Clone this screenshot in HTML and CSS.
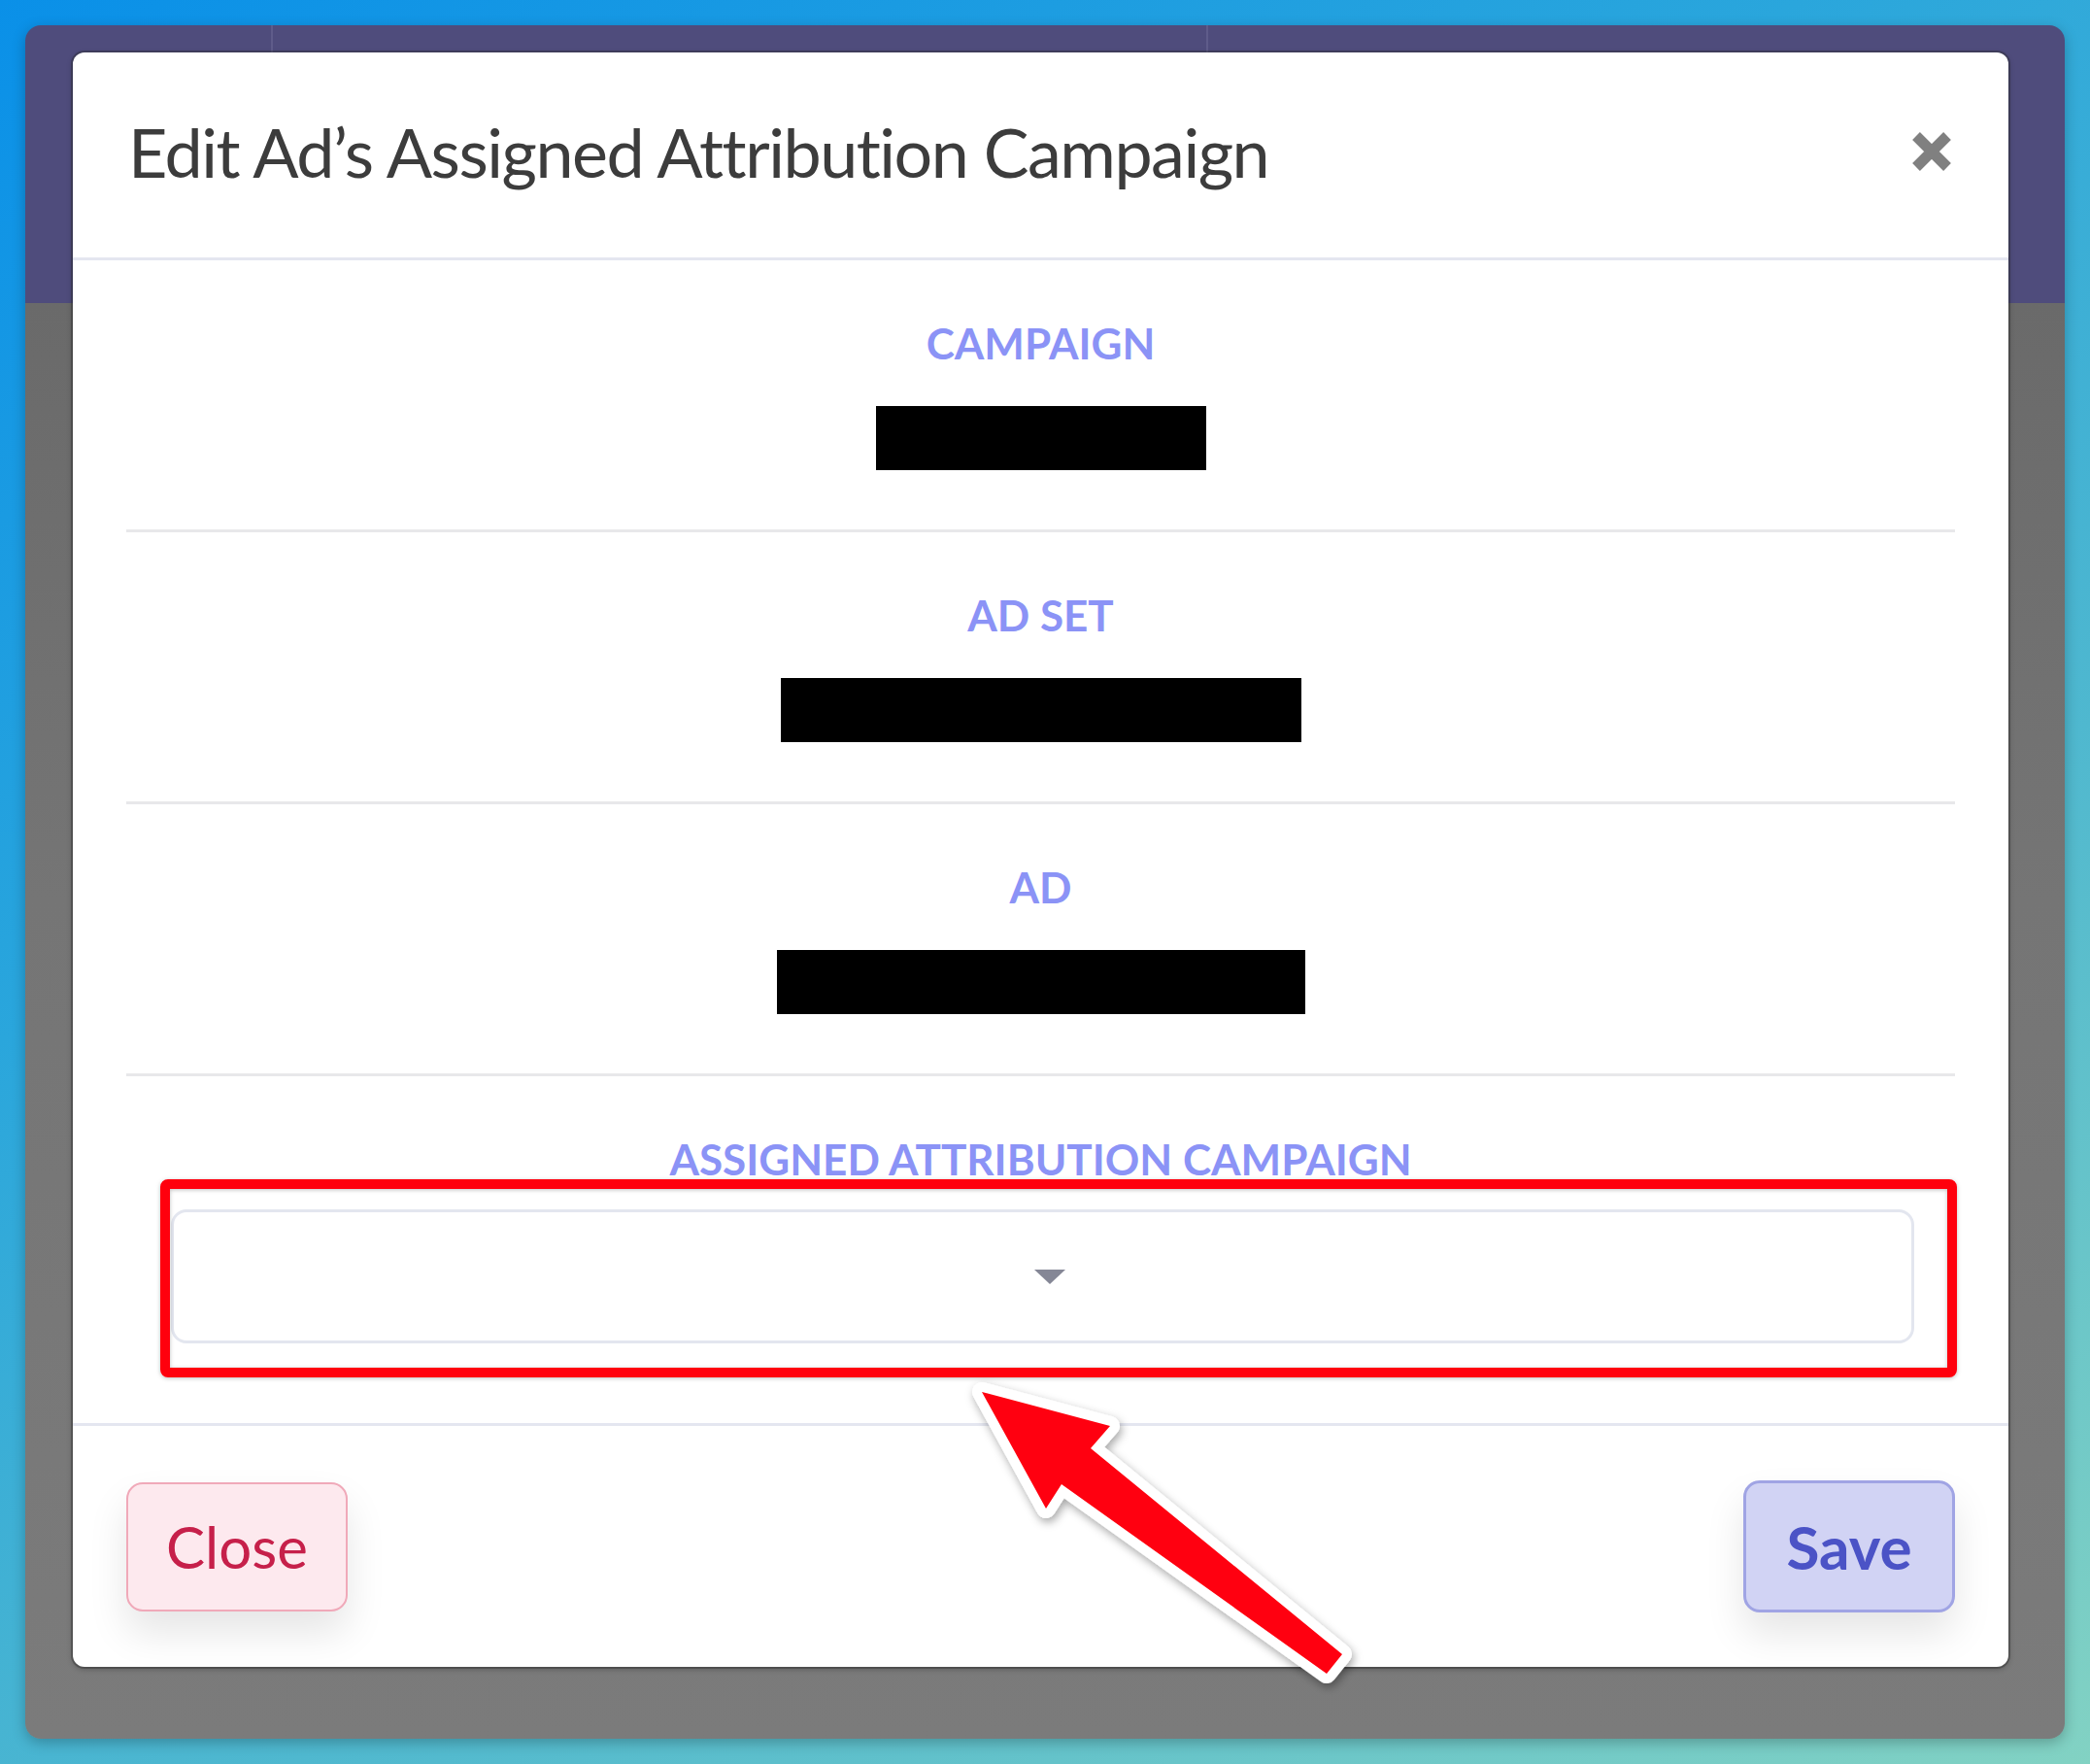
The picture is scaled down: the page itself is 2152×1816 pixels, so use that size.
FILE: index.html
```html
<!DOCTYPE html>
<html lang="en">
<head>
<meta charset="utf-8">
<title>Edit Ad's Assigned Attribution Campaign</title>
<link rel="stylesheet" href="styles.css">
</head>
<body>
<div class="window">
  <div class="modal">
    <div class="modal-header">
      <h1 class="modal-title">Edit Ad’s Assigned Attribution Campaign</h1>
      <button class="close-x" aria-label="Close">
        <svg width="42" height="42" viewBox="0 0 42 42"><path d="M5 5 L37 37 M37 5 L5 37" stroke="#808080" stroke-width="11" fill="none"/></svg>
      </button>
    </div>
    <div class="modal-body">
      <div class="field">
        <div class="field-label">CAMPAIGN</div>
        <div class="redact redact-1"></div>
      </div>
      <div class="field">
        <div class="field-label">AD SET</div>
        <div class="redact redact-2"></div>
      </div>
      <div class="field">
        <div class="field-label">AD</div>
        <div class="redact redact-3"></div>
      </div>
      <div class="field field-last">
        <div class="field-label">ASSIGNED ATTRIBUTION CAMPAIGN</div>
        <div class="select">
          <span class="caret"></span>
        </div>
      </div>
    </div>
    <div class="modal-footer">
      <button class="btn btn-close">Close</button>
      <button class="btn btn-save">Save</button>
    </div>
  </div>
</div>
<svg class="annotation" width="2152" height="1816" viewBox="0 0 2152 1816">
  <defs>
    <filter id="sh" x="-20%" y="-20%" width="140%" height="140%">
      <feDropShadow dx="2" dy="4" stdDeviation="5" flood-color="#000" flood-opacity="0.35"/>
    </filter>
    <filter id="sh2" x="-5%" y="-20%" width="110%" height="140%">
      <feDropShadow dx="0" dy="1" stdDeviation="2" flood-color="#000" flood-opacity="0.25"/>
    </filter>
  </defs>
  <rect x="170" y="1219" width="1840" height="194" rx="3" fill="none" stroke="#ff0010" stroke-width="10" filter="url(#sh2)"/>
  <g filter="url(#sh)">
    <polygon points="1011,1433 1143,1468 1123,1491 1382,1703 1366,1723 1093,1528 1077,1553" fill="#fff" stroke="#fff" stroke-width="20" stroke-linejoin="round"/>
  </g>
  <polygon points="1011,1433 1143,1468 1123,1491 1382,1703 1366,1723 1093,1528 1077,1553" fill="#ff0010"/>
</svg>
</body>
</html>
```

FILE: styles.css
```css
* { box-sizing: border-box; }

html, body {
  margin: 0;
  padding: 0;
}

body {
  width: 2152px;
  height: 1816px;
  overflow: hidden;
  position: relative;
  font-family: "Lato", "Liberation Sans", sans-serif;
  background: linear-gradient(150deg, #0a90e8 0%, #2aa6dc 35%, #4fb8cf 65%, #82d2c3 100%);
}

.window {
  margin: 26px 0 0 26px;
  width: 2100px;
  height: 1764px;
  border-radius: 16px;
  overflow: hidden;
  padding: 28px 0 0 49px;
  background:
    linear-gradient(#5f5c8a, #5f5c8a) 253px 0 / 2px 286px no-repeat,
    linear-gradient(#5f5c8a, #5f5c8a) 1216px 0 / 2px 286px no-repeat,
    linear-gradient(to bottom, #4f4c7c 0, #4f4c7c 286px, #6a6a6a 286px, #757575 900px, #7b7b7b 100%);
  box-shadow: 0 4px 14px rgba(0, 0, 0, 0.25);
}

.modal {
  width: 1993px;
  height: 1662px;
  background: #ffffff;
  border-radius: 12px;
  display: flex;
  flex-direction: column;
  box-shadow: 0 0 0 2px rgba(40, 40, 40, 0.35), 0 2px 6px rgba(0, 0, 0, 0.3);
}

.modal-header {
  height: 214px;
  flex: none;
  border-bottom: 3px solid #e4e6f0;
  display: flex;
  align-items: center;
  justify-content: space-between;
  padding: 0 58px 8px 57px;
}

.modal-title {
  margin: 0;
  font-family: "Lato", "Liberation Sans", sans-serif;
  font-weight: 400;
  font-size: 70px;
  line-height: 1;
  color: #3c3c3c;
  letter-spacing: -1.5px;
}

.close-x {
  border: 0;
  background: none;
  padding: 0;
  width: 42px;
  height: 42px;
  display: block;
}

.close-x svg { display: block; }

.modal-body {
  flex: none;
  padding: 0 55px;
}

.field {
  display: flex;
  flex-direction: column;
  align-items: center;
  padding: 63px 0 61px;
  border-bottom: 3px solid #e8e8ea;
}

.field-label {
  font-family: "Lato", "Liberation Sans", sans-serif;
  font-weight: 700;
  font-size: 44px;
  line-height: 44px;
  color: #8b93f6;
  margin-bottom: 43px;
}

.redact {
  height: 66px;
  background: #000;
}

.redact-1 { width: 340px; }
.redact-2 { width: 536px; }
.redact-3 { width: 544px; }

.field-last {
  border-bottom: 0;
  padding-bottom: 82px;
  align-items: stretch;
}

.field-last .field-label {
  align-self: center;
  margin-bottom: 30px;
}

.select {
  margin: 0 42px 0 46px;
  height: 138px;
  border: 3px solid #e3e6ef;
  border-radius: 16px;
  display: flex;
  align-items: center;
  justify-content: center;
  padding-left: 14px;
}

.caret {
  width: 0;
  height: 0;
  border-left: 16px solid transparent;
  border-right: 16px solid transparent;
  border-top: 15px solid #858796;
}

.modal-footer {
  flex: 1;
  border-top: 3px solid #e4e6f0;
  display: flex;
  align-items: center;
  justify-content: space-between;
  padding: 0 55px;
}

.btn {
  font-family: "Lato", "Liberation Sans", sans-serif;
  font-size: 62px;
  line-height: 1;
  border-radius: 17px;
  display: flex;
  align-items: center;
  justify-content: center;
  box-shadow: 0 22px 40px rgba(0, 0, 0, 0.10);
  padding: 0;
}

.btn-close {
  width: 228px;
  height: 133px;
  background: #fde9ee;
  border: 2px solid #f0a9b9;
  color: #c6204a;
  font-weight: 400;
  font-size: 60px;
}

.btn-save {
  width: 218px;
  height: 136px;
  background: #d1d3f4;
  border: 3px solid #a0a4e4;
  color: #4b53c6;
  font-weight: 700;
}

.annotation {
  position: absolute;
  top: 0;
  left: 0;
  pointer-events: none;
}
```
